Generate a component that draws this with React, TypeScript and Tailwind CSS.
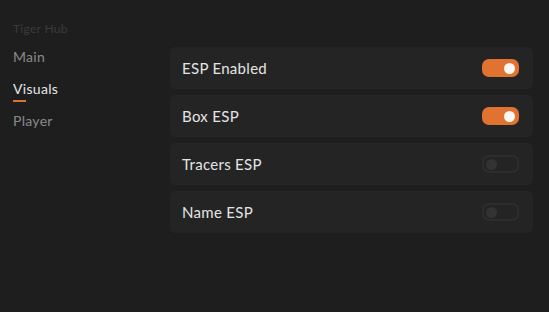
import { useState } from "react";

const tabs = ["Main", "Visuals", "Player"];

const initialToggles = [
  { label: "ESP Enabled", on: true },
  { label: "Box ESP", on: true },
  { label: "Tracers ESP", on: false },
  { label: "Name ESP", on: false },
];

function Toggle({ on, onClick }: { on: boolean; onClick: () => void }) {
  return (
    <button
      onClick={onClick}
      className={`flex h-[18px] w-[37px] items-center rounded-[7px] px-[4px] ${
        on
          ? "justify-end bg-[#e07232]"
          : "justify-start border-2 border-[#2d2d2d] bg-[#242424]"
      }`}
    >
      <span
        className={`block h-[11px] w-[11px] rounded-full ${
          on ? "bg-[#fff8f2]" : "-ml-[2px] bg-[#333333]"
        }`}
      />
    </button>
  );
}

export default function App() {
  const [active, setActive] = useState("Visuals");
  const [toggles, setToggles] = useState(initialToggles);

  return (
    <div
      className="flex h-[312px] w-[549px] bg-[#1e1e1e] tracking-[0.3px]"
      style={{ fontFamily: "Lato, 'Open Sans', sans-serif" }}
    >
      {/* Sidebar */}
      <div className="w-[170px] shrink-0 pl-[13px] pt-[20px]">
        <div className="text-[12px] leading-[18px] text-[#3b3b3b]">Tiger Hub</div>
        <div className="mt-[10px] flex flex-col">
          {tabs.map((tab) => (
            <div
              key={tab}
              onClick={() => setActive(tab)}
              className={`relative h-[32px] cursor-pointer text-[14px] leading-[18px] ${
                active === tab ? "text-[#e6e6e6]" : "text-[#8a8a8a]"
              }`}
            >
              {tab}
              {active === tab && (
                <span className="absolute left-0 top-[20px] block h-[2px] w-[13px] bg-[#d9713a]" />
              )}
            </div>
          ))}
        </div>
      </div>

      {/* Content */}
      <div className="flex flex-1 flex-col gap-[6px] pr-[16px] pt-[47px]">
        {toggles.map((t, i) => (
          <div
            key={t.label}
            className="flex h-[42px] items-center justify-between rounded-[5px] bg-[#242424] pl-[12px] pr-[14px]"
          >
            <span className="text-[15px] text-[#e4e4e4]">{t.label}</span>
            <Toggle
              on={t.on}
              onClick={() =>
                setToggles((prev) =>
                  prev.map((p, j) => (j === i ? { ...p, on: !p.on } : p))
                )
              }
            />
          </div>
        ))}
      </div>
    </div>
  );
}
